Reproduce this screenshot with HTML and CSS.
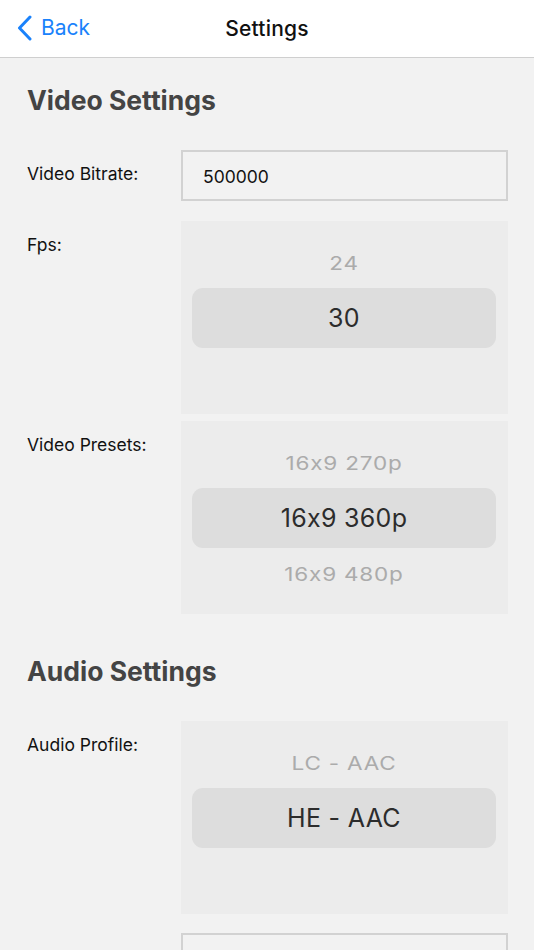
FILE: index.html
```html
<!DOCTYPE html>
<html>
<head>
<meta charset="utf-8">
<link rel="stylesheet" href="styles.css">
</head>
<body>
<header class="nav">
  <a class="back">
    <svg class="chev" width="16" height="26" viewBox="0 0 16 26"><path d="M13 2 L2.5 13 L13 24" fill="none" stroke="#1a82fb" stroke-width="3" stroke-linecap="round" stroke-linejoin="round"/></svg>
    <span>Back</span>
  </a>
  <div class="title">Settings</div>
</header>
<main class="content">
  <h2 class="section-title">Video Settings</h2>
  <div class="row">
    <div class="label">Video Bitrate:</div>
    <div class="input">500000</div>
  </div>
  <div class="row row-picker">
    <div class="label">Fps:</div>
    <div class="picker">
      <div class="item"><span>24</span></div>
      <div class="item selected">30</div>
    </div>
  </div>
  <div class="row row-picker2">
    <div class="label">Video Presets:</div>
    <div class="picker">
      <div class="item"><span>16x9 270p</span></div>
      <div class="item selected">16x9 360p</div>
      <div class="item"><span>16x9 480p</span></div>
    </div>
  </div>
  <h2 class="section-title audio">Audio Settings</h2>
  <div class="row">
    <div class="label">Audio Profile:</div>
    <div class="picker">
      <div class="item"><span>LC - AAC</span></div>
      <div class="item selected">HE - AAC</div>
    </div>
  </div>
  <div class="row row-last">
    <div class="label"></div>
    <div class="input"></div>
  </div>
</main>
</body>
</html>
```
FILE: styles.css
```css
html, body {
  margin: 0;
  padding: 0;
}
body {
  background: #f2f2f2;
  font-family: Inter, "Liberation Sans", sans-serif;
  font-feature-settings: "calt" 0;
  width: 534px;
  height: 950px;
  overflow: hidden;
}
.nav {
  height: 57px;
  background: #ffffff;
  border-bottom: 1px solid #cfcfcf;
  display: flex;
  align-items: center;
  justify-content: center;
  position: relative;
}
.back {
  position: absolute;
  left: 17px;
  top: 15px;
  display: flex;
  align-items: center;
  gap: 8px;
  color: #1a82fb;
  font-size: 21px;
  line-height: 26px;
}
.chev {
  display: block;
}
.title {
  font-size: 21px;
  font-weight: 500;
  color: #111;
  letter-spacing: 0.2px;
}
.content {
  padding: 27px 26px 0 27px;
}
.section-title {
  margin: 0 0 35px 0;
  font-size: 26.5px;
  line-height: 30px;
  font-weight: 700;
  color: #444;
  letter-spacing: 0;
}
.section-title.audio {
  margin-top: 42px;
}
.row {
  display: grid;
  grid-template-columns: 154px 1fr;
}
.row-picker {
  margin-top: 20px;
}
.row-picker2 {
  margin-top: 7px;
}
.row-last {
  margin-top: 19px;
}
.label {
  font-size: 17.5px;
  line-height: 20px;
  color: #111;
  padding-top: 14px;
}
.input {
  height: 47px;
  border: 2px solid #d2d2d2;
  background: #f2f2f2;
  font-size: 17.5px;
  line-height: 49px;
  color: #111;
  padding-left: 20px;
}
.picker {
  height: 193px;
  background: #ececec;
  padding: 22px 12px 0 11px;
  box-sizing: border-box;
  display: flex;
  flex-direction: column;
  gap: 5px;
}
.item {
  height: 40px;
  line-height: 40px;
  text-align: center;
  font-size: 22.5px;
  color: #ababab;
  flex-shrink: 0;
  letter-spacing: 0.8px;
}
.item span {
  display: inline-block;
  transform: scaleY(0.82);
}
.item.selected {
  height: 60px;
  line-height: 60px;
  background: #dddddd;
  border-radius: 11px;
  font-size: 25px;
  color: #2c2c2c;
  margin-bottom: 1px;
  letter-spacing: 0.3px;
}
```
